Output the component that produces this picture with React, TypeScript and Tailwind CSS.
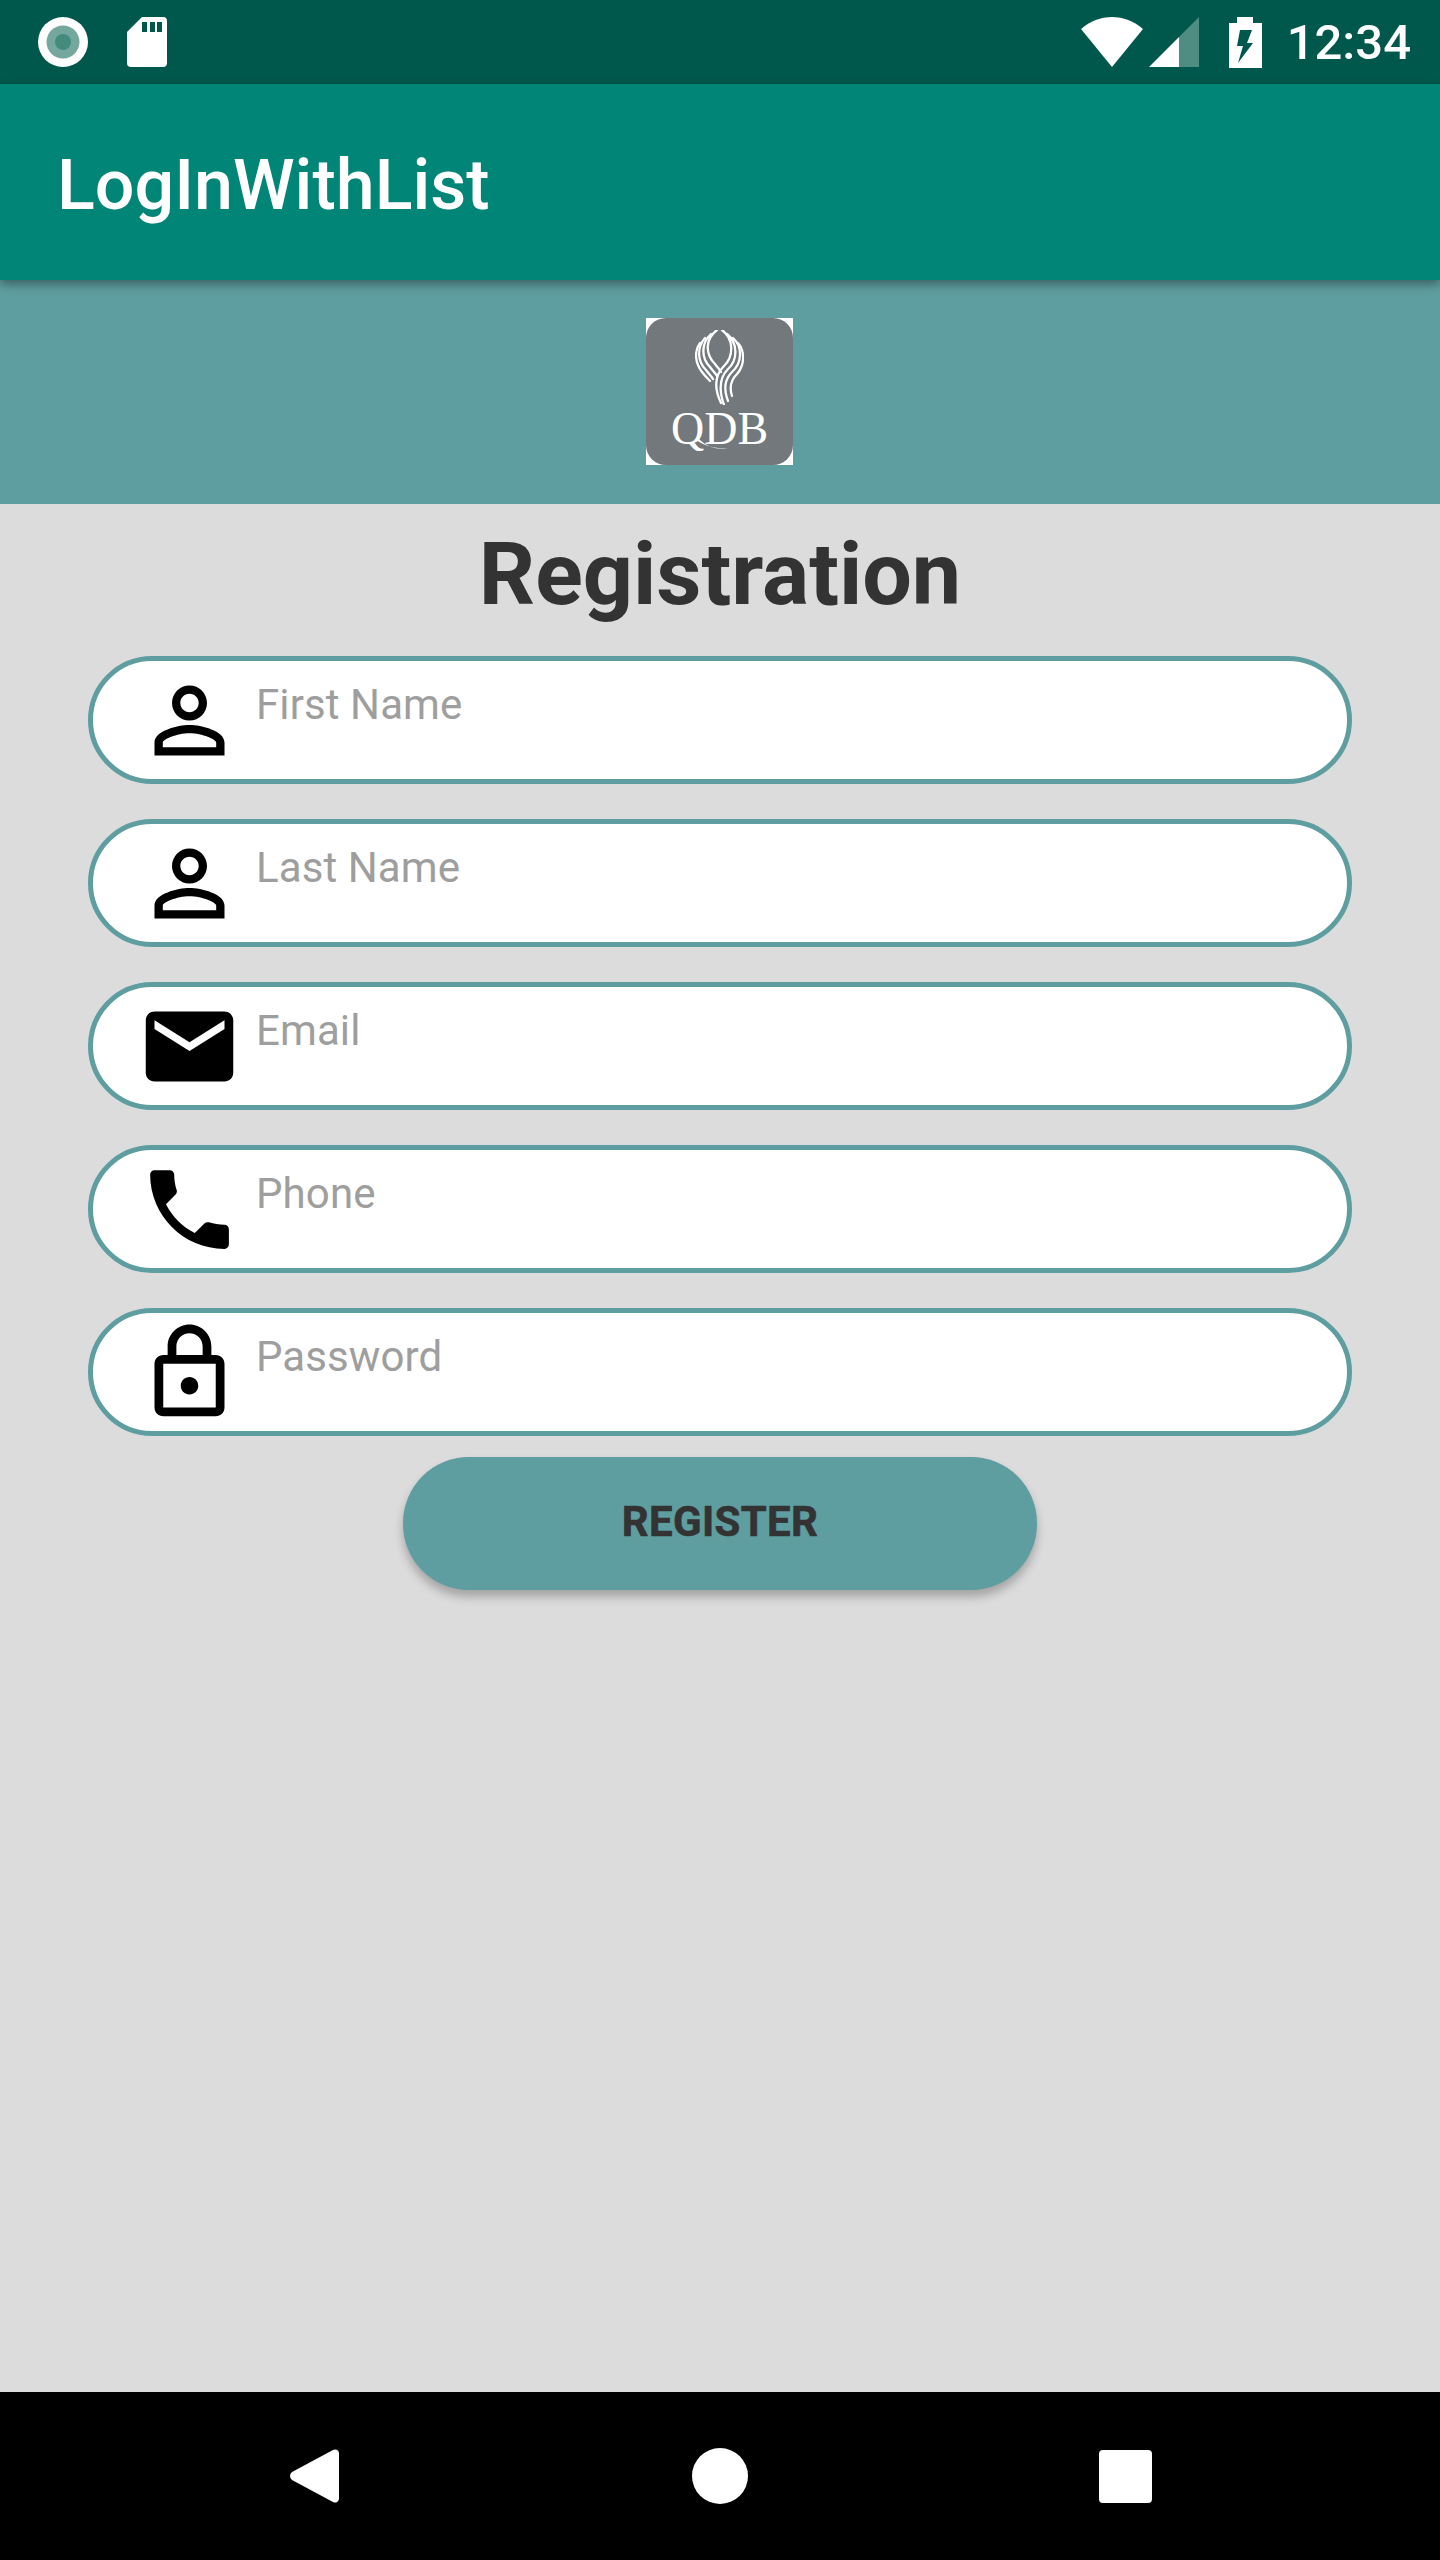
import React from "react";

const PERSON = "M12 5.9c1.16 0 2.1.94 2.1 2.1s-.94 2.1-2.1 2.1S9.9 9.16 9.9 8s.94-2.1 2.1-2.1m0 9c2.97 0 6.1 1.46 6.1 2.1v1.1H5.9V17c0-.64 3.13-2.1 6.1-2.1M12 4C9.79 4 8 5.79 8 8s1.79 4 4 4 4-1.79 4-4-1.79-4-4-4zm0 9c-2.67 0-8 1.34-8 4v3h16v-3c0-2.66-5.33-4-8-4z";
const EMAIL = "M20 4H4c-1.1 0-1.99.9-1.99 2L2 18c0 1.1.9 2 2 2h16c1.1 0 2-.9 2-2V6c0-1.1-.9-2-2-2zm0 4l-8 5-8-5V6l8 5 8-5v2z";
const PHONE = "M6.62 10.79c1.44 2.83 3.76 5.14 6.59 6.59l2.2-2.2c.27-.27.67-.36 1.02-.24 1.12.37 2.33.57 3.57.57.55 0 1 .45 1 1V20c0 .55-.45 1-1 1-9.39 0-17-7.61-17-17 0-.55.45-1 1-1h3.5c.55 0 1 .45 1 1 0 1.25.2 2.45.57 3.57.11.35.03.74-.25 1.02l-2.2 2.2z";
const LOCK = "M18 8h-1V6c0-2.76-2.24-5-5-5S7 3.24 7 6v2H6c-1.1 0-2 .9-2 2v10c0 1.1.9 2 2 2h12c1.1 0 2-.9 2-2V10c0-1.1-.9-2-2-2zM9 6c0-1.66 1.34-3 3-3s3 1.34 3 3v2H9V6zm9 14H6V10h12v10zm-6-3c1.1 0 2-.9 2-2s-.9-2-2-2-2 .9-2 2 .9 2 2 2z";

const fields = [
  { label: "First Name", d: PERSON },
  { label: "Last Name", d: PERSON },
  { label: "Email", d: EMAIL },
  { label: "Phone", d: PHONE },
  { label: "Password", d: LOCK },
];

function Field({ label, d }: { label: string; d: string }) {
  return (
    <div className="flex h-[128px] items-center rounded-[64px] border-[5px] border-[#5F9EA0] bg-white pl-[44px]">
      <svg viewBox="0 0 24 24" className="h-[105px] w-[105px] shrink-0" fill="#000">
        <path d={d} />
      </svg>
      <div className="ml-[14px] mt-[19px] self-start text-[42px] leading-[49px] tracking-[0.1px] text-[#9E9E9E]">{label}</div>
    </div>
  );
}

function Flame() {
  const strands = [
    "M27 0C39 9 39 26 29 36C21 44 18 56 26 73",
    "M32 4C43 13 43 30 33 39C25 47 23 58 29 75",
    "M38 8C48 17 47 33 37 42C30 49 28 58 33 71",
    "M43 13C50 21 50 35 42 44C36 50 34 57 37 66",
    "M22 0C10 9 10 24 20 34C23 38 25 40 26 42",
    "M16 4C6 13 6 28 15 37C18 41 21 44 22 46",
    "M10 8C2 17 2 31 11 40C14 44 17 47 18 49",
    "M5 13C-1 21 0 33 7 42C10 46 13 49 15 51",
  ];
  return (
    <svg viewBox="0 0 49 75" className="h-[75px] w-[49px]" fill="none" stroke="#fff" strokeWidth="2.3" strokeLinecap="round">
      {strands.map((s) => (
        <path key={s} d={s} />
      ))}
    </svg>
  );
}

export default function App() {
  return (
    <div className="flex h-[2560px] w-[1440px] flex-col overflow-hidden bg-[#DCDCDC] font-[Roboto,sans-serif]">
      <div className="flex h-[84px] shrink-0 items-center justify-between bg-[#00574B] pl-[38px] pr-[29px]">
        <div className="flex items-center gap-[39px]">
          <svg viewBox="0 0 50 50" className="h-[50px] w-[50px]">
            <circle cx="25" cy="25" r="25" fill="#fff" />
            <circle cx="25" cy="25" r="16.5" fill="#74A89F" />
            <circle cx="25" cy="25" r="8" fill="#438B7D" />
          </svg>
          <svg viewBox="0 0 40 50" className="h-[50px] w-[40px]">
            <path d="M15 0H36a4 4 0 0 1 4 4V46a4 4 0 0 1-4 4H4a4 4 0 0 1-4-4V15Z" fill="#fff" />
            <path d="M15 5h5v10h-5zM23 5h5v10h-5zM30 5h5v10h-5z" fill="#00574B" />
          </svg>
        </div>
        <div className="flex items-center">
          <svg viewBox="0 0 62 50" className="h-[50px] w-[62px]">
            <path d="M0 12C18-4 44-4 62 12L31 50Z" fill="#fff" />
          </svg>
          <svg viewBox="0 0 50 50" className="ml-[6px] h-[50px] w-[50px]">
            <path d="M30 20L50 0V50H30Z" fill="#4F8D82" />
            <path d="M30 20V50H0Z" fill="#fff" />
          </svg>
          <svg viewBox="0 0 33 51" className="ml-[30px] h-[51px] w-[33px]">
            <path fillRule="evenodd" d="M8 0H24V6H33V51H0V6H8ZM11 13H23L18 26H24L9 46L14 29H8Z" fill="#fff" />
          </svg>
          <div className="ml-[25px] text-[49px] font-medium leading-[57px] text-white">12:34</div>
        </div>
      </div>

      <div className="relative z-10 flex h-[196px] shrink-0 items-center bg-[#008577] pl-[57px] pt-[6px] shadow-[0_4px_10px_rgba(0,0,0,0.4)]">
        <div className="text-[70px] font-medium leading-[82px] text-white">LogInWithList</div>
      </div>

      <div className="flex h-[224px] shrink-0 items-center justify-center bg-[#5F9EA0]">
        <div className="mb-px mr-px bg-white">
          <div className="relative flex h-[147px] w-[147px] flex-col items-center rounded-[20px] bg-[#72787B] pt-[12px]">
            <Flame />
            <div className="mt-[1px] font-['Liberation_Serif',serif] text-[46px] leading-[46px] text-white">QDB</div>
            <svg viewBox="0 0 34 14" className="absolute left-[50px] top-[120px] h-[14px] w-[34px]">
              <path d="M2 0C8 7 20 13 33 10C22 11 10 9 0 2Z" fill="#fff" />
            </svg>
          </div>
        </div>
      </div>

      <div className="flex-1">
        <div className="h-[152px] text-center text-[88px] font-bold leading-[140px] text-[#333333]">Registration</div>
        <div className="mx-[88px] flex flex-col gap-[35px]">
          {fields.map((f) => (
            <Field key={f.label} label={f.label} d={f.d} />
          ))}
        </div>
        <div className="mx-auto mt-[21px] flex h-[133px] w-[634px] items-center justify-center rounded-[66px] bg-[#5F9EA0] pb-[4px] text-[42px] font-bold tracking-[0.3px] text-[#333333] shadow-[0_7px_10px_rgba(0,0,0,0.25)] [-webkit-text-stroke:0.6px_#333333]">
          REGISTER
        </div>
      </div>

      <div className="flex h-[168px] shrink-0 items-center bg-black pl-[290px]">
        <svg viewBox="0 0 49 56" className="h-[56px] w-[49px]">
          <path d="M43 2a4 4 0 0 1 6 3V51a4 4 0 0 1-6 3L2 32a5 5 0 0 1 0-8Z" fill="#fff" />
        </svg>
        <div className="ml-[353px] h-[56px] w-[56px] rounded-full bg-white" />
        <div className="ml-[351px] h-[53px] w-[53px] rounded-[4px] bg-white" />
      </div>
    </div>
  );
}
